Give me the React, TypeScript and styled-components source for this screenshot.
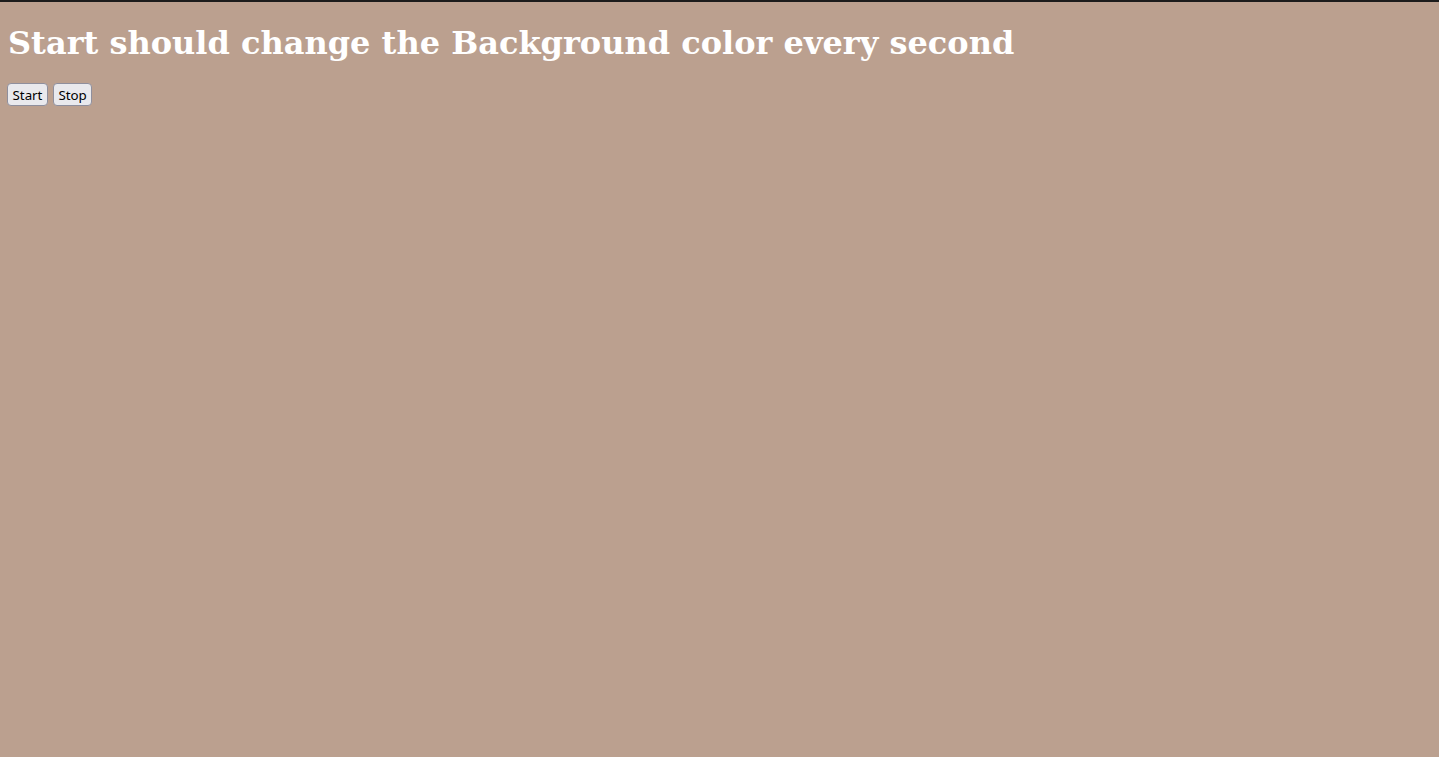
import React, { useEffect, useState } from 'react';
import styled, { createGlobalStyle } from 'styled-components';

const GlobalStyle = createGlobalStyle<{ bg: string }>`
    html {
        border-top: 2px solid #1c1c1c;
        min-height: 100%;
        background-color: ${({ bg }) => bg};
    }
    body {
        margin: 0 7px;
        font-family: "DejaVu Serif", serif;
    }
`;

const Title = styled.h1`
    font-size: 32px;
    font-weight: bold;
    color: #ffffff;
    margin: 22px 0 21px 1px;
`;

const Controls = styled.div`
    display: flex;
    gap: 5px;
`;

const Button = styled.button`
    box-sizing: border-box;
    height: 23px;
    font-family: "Noto Sans", sans-serif;
    font-size: 13.33px;
    line-height: 16px;
    color: #000;
    background: #e9e9ed;
    border: 1px solid #8f8f9d;
    border-radius: 4px;
    padding: 0 4.5px;
    cursor: pointer;
`;

const randomColor = () =>
    '#' + Math.floor(Math.random() * 0xffffff).toString(16).padStart(6, '0');

const App = () => {
    const [bg, setBg] = useState('#bba08f');
    const [running, setRunning] = useState(false);

    // change the background every second while running
    useEffect(() => {
        if (!running) return;
        const id = setInterval(() => setBg(randomColor()), 1000);
        return () => clearInterval(id);
    }, [running]);

    return (
        <>
            <GlobalStyle bg={bg} />
            <Title>Start should change the Background color every second</Title>
            <Controls>
                <Button onClick={() => setRunning(true)}>Start</Button>
                <Button onClick={() => setRunning(false)}>Stop</Button>
            </Controls>
        </>
    );
};

export default App;
